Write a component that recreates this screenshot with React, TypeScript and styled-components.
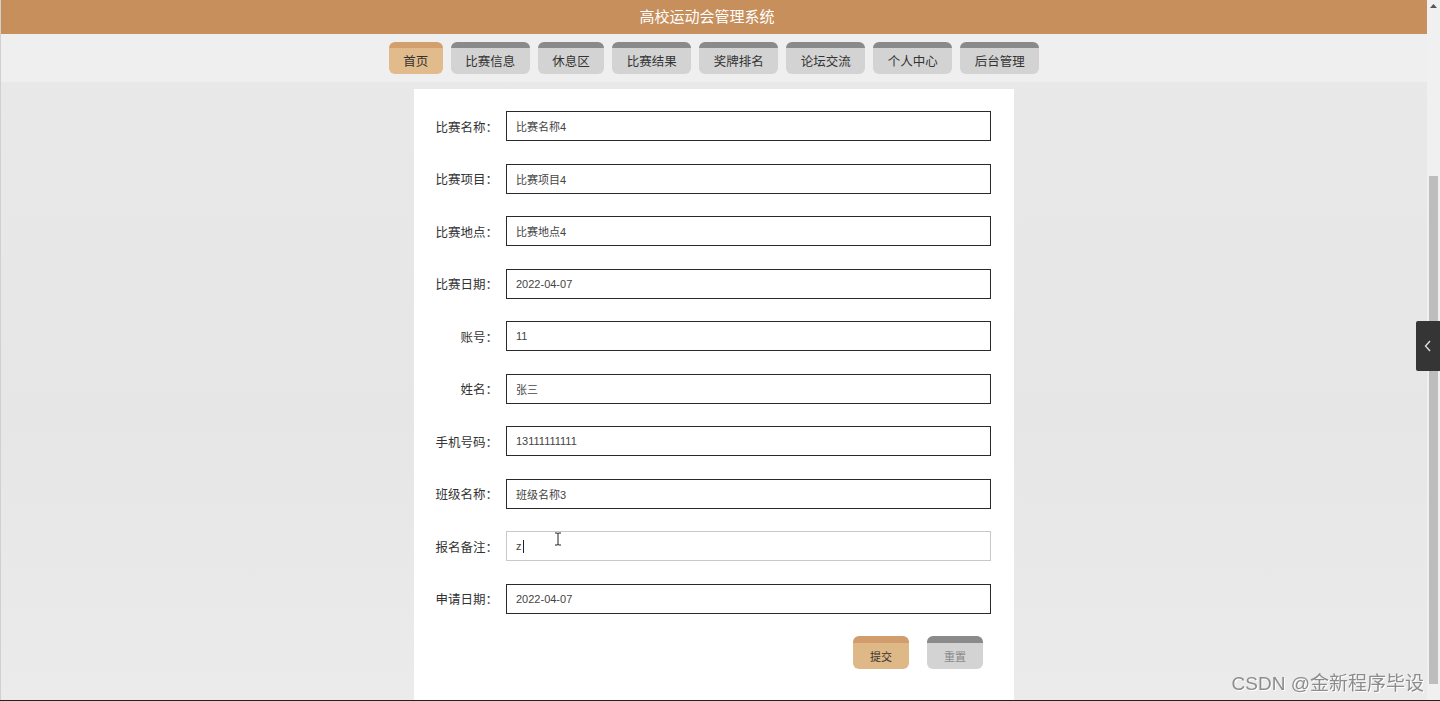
import React from "react";
import styled, { createGlobalStyle } from "styled-components";

const GlobalStyle = createGlobalStyle`
  html, body {
    margin: 0;
    padding: 0;
    height: 701px;
    overflow: hidden;
    background: #e8e8e8;
    font-family: "Liberation Sans", "Noto Sans CJK SC", sans-serif;
    color: #333;
  }
`;

const Screen = styled.div`
  display: flex;
  width: 1440px;
  height: 701px;
  overflow: hidden;
  border-bottom: 1px solid #222;
  box-sizing: border-box;
`;

const Main = styled.div`
  flex: 1;
  display: flex;
  flex-direction: column;
  background: linear-gradient(180deg, #e9e9e9 0%, #e6e6e6 60%, #ebebeb 100%);
  border-left: 1px solid #d0d0d0;
`;

const Header = styled.header`
  height: 34px;
  box-sizing: border-box;
  padding: 0 14px 4px 0;
  background: #c78f5c;
  display: flex;
  align-items: center;
  justify-content: center;
  color: #fff;
  font-size: 15px;
  font-family: "Noto Sans CJK SC", sans-serif;
`;

const Nav = styled.nav`
  height: 48px;
  background: #efefef;
  display: flex;
  align-items: flex-start;
  justify-content: center;
  gap: 8px;
  padding-top: 8px;
  box-sizing: border-box;
`;

const NavButton = styled.div<{ $active?: boolean }>`
  height: 32px;
  padding: 5px 14.5px 0;
  border-radius: 6px;
  box-sizing: border-box;
  display: flex;
  align-items: center;
  justify-content: center;
  font-size: 12.5px;
  font-family: "Noto Sans CJK SC", sans-serif;
  color: #333;
  background: ${(p) =>
    p.$active
      ? "linear-gradient(180deg, #d3a06d 0 6px, #e1bb8b 6px)"
      : "linear-gradient(180deg, #8a8a8a 0 6px, #d3d3d3 6px)"};
`;

const Body = styled.div`
  flex: 1;
  display: flex;
  justify-content: center;
  padding-top: 7px;
`;

const Panel = styled.form`
  width: 600px;
  background: #fff;
  box-sizing: border-box;
  padding: 22px 23px 0 20px;
  display: flex;
  flex-direction: column;
  gap: 22.5px;
`;

const Row = styled.div`
  display: flex;
  align-items: center;
  gap: 4px;
`;

const Label = styled.label`
  width: 68px;
  flex: none;
  box-sizing: border-box;
  padding-right: 4px;
  text-align: right;
  font-size: 12.5px;
  font-family: "Noto Sans CJK SC", sans-serif;
  color: #333;
  white-space: nowrap;
`;

const Field = styled.div<{ $focused?: boolean }>`
  flex: 1;
  height: 30px;
  box-sizing: border-box;
  border: 1px solid ${(p) => (p.$focused ? "#c8c8c8" : "#2a2a2a")};
  display: flex;
  align-items: center;
  padding-left: 9px;
  font-size: 11px;
  color: #444;
  font-family: "Liberation Sans", "Noto Sans CJK SC", sans-serif;
`;

const Caret = styled.span`
  display: inline-block;
  width: 1px;
  height: 13px;
  background: #222;
  margin-left: 1px;
`;

const Actions = styled.div`
  display: flex;
  justify-content: flex-end;
  gap: 18px;
  padding-right: 8px;
`;

const ActionButton = styled.button<{ $primary?: boolean }>`
  width: 56px;
  height: 33px;
  border: none;
  border-radius: 6px;
  padding-top: 7px;
  font-size: 11px;
  font-family: "Noto Sans CJK SC", sans-serif;
  color: ${(p) => (p.$primary ? "#333" : "#8a8a8a")};
  background: ${(p) =>
    p.$primary
      ? "linear-gradient(180deg, #d19d6c 0 7px, #dfb887 7px)"
      : "linear-gradient(180deg, #8a8a8a 0 7px, #d3d3d3 7px)"};
`;

const ScrollTrack = styled.div`
  width: 13px;
  flex: none;
  background: #f0f0f0;
  display: flex;
  flex-direction: column;
  align-items: center;
  padding-top: 4px;
  box-sizing: border-box;
`;

const ScrollThumb = styled.div`
  width: 9px;
  height: 508px;
  margin-top: 168px;
  background: #bdbdbd;
`;

const SideTab = styled.div`
  position: fixed;
  right: 0;
  top: 321px;
  width: 24px;
  height: 50px;
  background: #353535;
  border-radius: 2px 0 0 2px;
  display: flex;
  align-items: center;
  justify-content: center;
`;

const Watermark = styled.div`
  position: fixed;
  right: 16px;
  bottom: 6px;
  font-size: 19px;
  color: #8c8c8c;
  text-shadow: 1px 1px 0 #fff;
  font-family: "Liberation Sans", "Noto Sans CJK SC", sans-serif;
`;

const Cursor = styled.svg`
  position: fixed;
  left: 554px;
  top: 532px;
`;

const navItems = ["首页", "比赛信息", "休息区", "比赛结果", "奖牌排名", "论坛交流", "个人中心", "后台管理"];

const fields: { label: string; value: string; focused?: boolean }[] = [
  { label: "比赛名称：", value: "比赛名称4" },
  { label: "比赛项目：", value: "比赛项目4" },
  { label: "比赛地点：", value: "比赛地点4" },
  { label: "比赛日期：", value: "2022-04-07" },
  { label: "账号：", value: "11" },
  { label: "姓名：", value: "张三" },
  { label: "手机号码：", value: "13111111111" },
  { label: "班级名称：", value: "班级名称3" },
  { label: "报名备注：", value: "z", focused: true },
  { label: "申请日期：", value: "2022-04-07" },
];

export default function App() {
  return (
    <>
      <GlobalStyle />
      <Screen>
        <Main>
          <Header>高校运动会管理系统</Header>
          <Nav>
            {navItems.map((n, i) => (
              <NavButton key={n} $active={i === 0}>
                {n}
              </NavButton>
            ))}
          </Nav>
          <Body>
            <Panel onSubmit={(e) => e.preventDefault()}>
              {fields.map((f) => (
                <Row key={f.label}>
                  <Label>{f.label}</Label>
                  <Field $focused={f.focused}>
                    {f.value}
                    {f.focused && <Caret />}
                  </Field>
                </Row>
              ))}
              <Actions>
                <ActionButton type="button" $primary>
                  提交
                </ActionButton>
                <ActionButton type="button">重置</ActionButton>
              </Actions>
            </Panel>
          </Body>
        </Main>
        <ScrollTrack>
          <svg width="7" height="4" viewBox="0 0 7 4">
            <path d="M0 4 L3.5 0 L7 4 Z" fill="#555" />
          </svg>
          <ScrollThumb />
        </ScrollTrack>
      </Screen>
      <SideTab>
        <svg width="8" height="12" viewBox="0 0 8 12">
          <path d="M6 1 L1.5 6 L6 11" stroke="#ddd" strokeWidth="1.4" fill="none" />
        </svg>
      </SideTab>
      <Cursor width="8" height="14" viewBox="0 0 8 14">
        <path d="M1 1 H3 Q4 1 4 2 V12 Q4 13 3 13 H1 M7 1 H5 Q4 1 4 2 M4 12 Q4 13 5 13 H7" stroke="#222" strokeWidth="1" fill="none" />
      </Cursor>
      <Watermark>CSDN @金新程序毕设</Watermark>
    </>
  );
}
